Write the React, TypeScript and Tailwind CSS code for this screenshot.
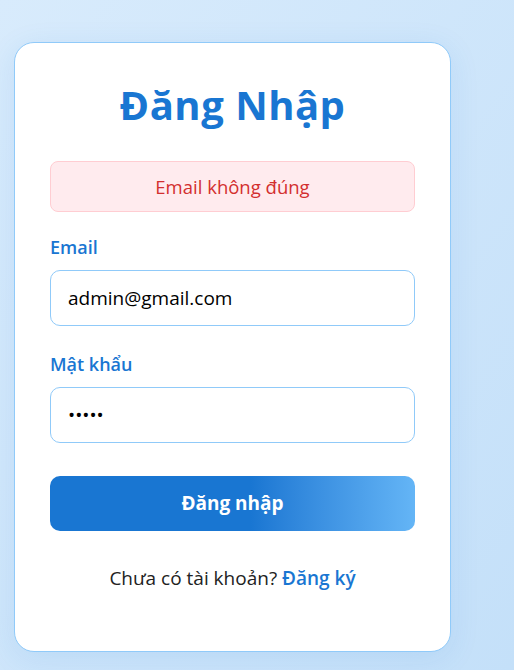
import { useState } from "react";

function App() {
  const [email, setEmail] = useState("admin@gmail.com");
  const [password, setPassword] = useState("12345");

  return (
    <div
      className="min-h-[670px] w-full bg-gradient-to-br from-[#d8ebfc] to-[#c4e0f9] pt-[42px] pl-[14px]"
      style={{ fontFamily: '"Open Sans", "Noto Sans", sans-serif' }}
    >
      <div className="w-[437px] rounded-[20px] border border-[#90caf9] bg-white px-[35px] pt-[38px] pb-[59px] shadow-[0_6px_30px_rgba(25,118,210,0.10)]">
        <h2 className="text-center text-[40px] leading-[48px] font-bold tracking-[0.5px] text-[#1976d2]">
          Đăng Nhập
        </h2>

        {/* Error message */}
        <div className="mt-[32px] h-[51px] flex items-center justify-center rounded-[8px] border border-[#ffcdd2] bg-[#ffebee] text-[18.5px] text-[#d32f2f]">
          Email không đúng
        </div>

        <form onSubmit={(e) => e.preventDefault()}>
          <label className="mt-[22px] mb-[9px] block text-[18px] leading-[27px] font-semibold text-[#1976d2]">
            Email
          </label>
          <input
            type="email"
            value={email}
            onChange={(e) => setEmail(e.target.value)}
            className="block h-[56px] w-full rounded-[10px] border border-[#90caf9] px-[17px] text-[19px] text-black outline-none"
          />

          <label className="mt-[25px] mb-[9px] block text-[18px] leading-[27px] font-semibold text-[#1976d2]">
            Mật khẩu
          </label>
          <input
            type="password"
            value={password}
            onChange={(e) => setPassword(e.target.value)}
            className="block h-[56px] w-full rounded-[10px] border border-[#90caf9] px-[17px] text-[19px] text-black outline-none"
          />

          <button
            type="submit"
            className="mt-[33px] block h-[55px] w-full rounded-[10px] bg-gradient-to-r from-[#1976d2] from-55% to-[#64b5f6] text-[19px] font-bold text-white"
          >
            Đăng nhập
          </button>
        </form>

        <p className="mt-[34px] text-center text-[19px] leading-[27px] text-[#222]">
          Chưa có tài khoản?{" "}
          <a href="#" className="font-semibold text-[#1976d2]">
            Đăng ký
          </a>
        </p>
      </div>
    </div>
  );
}

export default App;
